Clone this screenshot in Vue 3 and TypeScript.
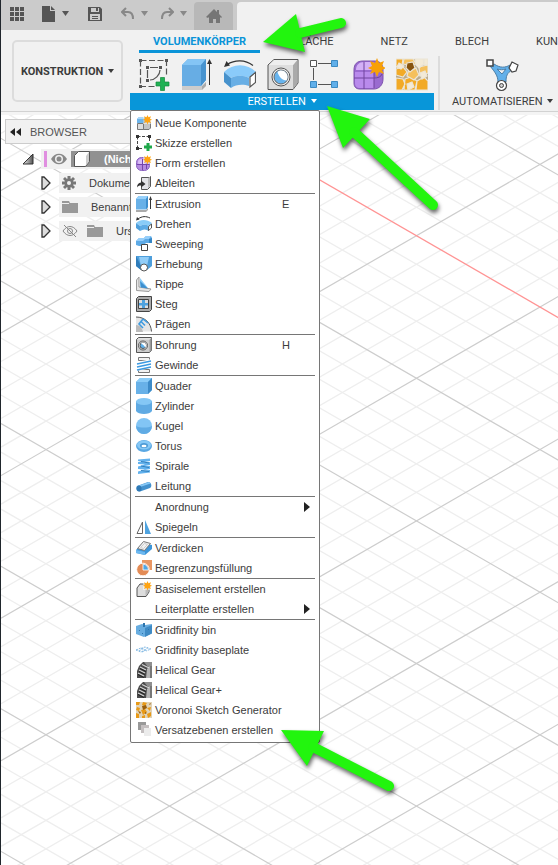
<script setup lang="ts">
interface MenuItem {
  label: string
  icon?: string
  shortcut?: string
  submenu?: boolean
}

interface GridLine {
  x1: number
  y1: number
  x2: number
  y2: number
  kind: 'minor' | 'major' | 'axis'
}

const star =
  '<path fill="#fff" d="M7 0h9v9H7z" opacity=".5"/><path fill="#ffa412" d="M11.500 0l1 2.300L15 1.300l-1 2.400 2 1-2 1 1 2.400-2.500-1-1 2.400-1-2.400-2.500 1 1-2.400-2-1 2-1-1-2.400 2.500 1z"/>'

const gear =
  '<path fill="#4c4c4c" d="M1 16V9l2-5 4-4h9v4l-4 1-1 11z"/><path fill="#8f8f8f" d="M8 0h8v4l-4 1z"/><path stroke="#d4d4d4" stroke-width="1.200" fill="none" d="M4 5l6 3M3 8l6 3M2 11l6 3M6 2.500l6 3"/><path stroke="#222" fill="none" d="M4 6.500l6 3M3 9.500l6 3M2 12.500l6 3"/><path fill="#b5b5b5" d="M11 7l3-3v12h-4z"/><path fill="#777" d="M14 4h2v12h-2z"/>'

const icons: Record<string, string> = {
  component:
    '<path fill="#6cb4ea" d="M1 4l2-2h6v6H1z"/><path fill="#3f8dc9" d="M7 4l2-2v6H7z"/><path fill="#a9d6f7" d="M1 4l2-2h6L7 4z"/><path fill="#ddd" stroke="#777" d="M1.500 8.500h6v6h-6z"/><path fill="#c4c4c4" stroke="#777" d="M7.500 8.500l1-1.500h6v6l-1.500 1.500H7.500z"/>' + star,
  sketch:
    '<path stroke="#444" stroke-dasharray="3 1.500" fill="none" d="M1.500 1.500h12v5M1.500 1.500v12h6"/><path fill="#333" d="M0 0h3v3H0zM12 0h3v3h-3zM0 12h3v3H0z"/><path fill="#1fa84a" d="M10.500 8h3v2.500H16v3h-2.500V16h-3v-2.500H8v-3h2.500z"/>',
  form:
    '<rect x=".5" y="2.500" width="13" height="13" rx="5" fill="#b58be0" stroke="#8a62bf"/><rect x="2" y="4" width="7" height="6" rx="3" fill="#d9bdf7"/><path stroke="#7545ad" fill="none" d="M6.500 4v11M1 9.500h12M10.500 8v6"/>' + star,
  derive:
    '<path fill="#e4e4e8" stroke="#555" d="M5.500 2.500h8l1-1v10l-3 3h-6V2.500z"/><path fill="#bbb" d="M12 3l2-1v9l-2 2z"/><path fill="#333" d="M5 5.500L9.500 9 5 12.500V10.500C3 10.500 2 11 1 12.500 1 9.500 2.500 7.700 5 7.500z"/>',
  extrude:
    '<path fill="#aaa" d="M0 14l10 0 2-2v2l-2 2H0z"/><path fill="#68b1e8" d="M0 3l2.500-3H12v11l-2 2.500H0z"/><path fill="#96d0fa" d="M0 3l2.500-3H12L10 3z"/><path fill="#3d8fcf" d="M10 3l2-3v11l-2 2.500z"/><path stroke="#333" fill="none" d="M14.500 2v11"/><path fill="#333" d="M13 4l1.500-4L16 4z"/>',
  revolve:
    '<path fill="#8accf8" d="M0 7c4-4 11-4 16 0l-3 3c-3-2-6-2-9 0z"/><path fill="#4d9edb" d="M0 7l4 3v5l-4-3z"/><path fill="#5eabe5" d="M4 10c3-2 6-2 9 0v5c-3-2-6-2-9 0z"/><path fill="#fff" stroke="#555" d="M12.500 10.500l3-2.500v4l-3 2.500z"/><path stroke="#333" fill="none" d="M2 3c4-3 8-3 12-1"/><path fill="#333" d="M0 4.500L1 1l2.500 2.500z"/>',
  sweep:
    '<path fill="#5daae6" d="M0 5l3-3h5l2-2h5l1 2v5h-6l-3 3H3L0 9z"/><path fill="#95cefa" d="M0 5l3-3h5l2-2h5l-2 3H9L7 5z"/><path fill="#3787c5" d="M13 3l3-1v5h-3z"/><path fill="#fff" stroke="#444" d="M5.500 8.500h6v6h-6z"/>',
  loft:
    '<path fill="#4d9edb" d="M0 0h16v10l-5 4H5l-5-4z"/><path fill="#91cdf8" d="M3 1h10l-2 9H5z"/><path fill="#2f7cba" d="M0 0l5 10v4l-5-4z"/><circle cx="8" cy="11.500" r="3.500" fill="#fff" stroke="#555"/>',
  rib:
    '<path fill="#e6e6e6" stroke="#999" d="M.5 4L3 1v10l12 2-2 2.500-12.500-1z"/><path fill="#8accf8" d="M4 2l8 10-8-1z"/><path fill="#3d8fcf" d="M4 5l8 7.500-7-1z"/>',
  web:
    '<path fill="#aaa" stroke="#444" d="M.5 2.500l2-2h13v13l-2 2H.5z"/><path fill="#ddd" stroke="#444" d="M2.500 3.500h10v9h-10z"/><path fill="#4ea2df" d="M6 4h3v3h3v2.500H9V12H6V9.500H3V7h3z"/>',
  emboss:
    '<path fill="#e6e6e6" d="M0 1c9-1 15 6 15.500 14.500H0z"/><path fill="#bbb" d="M0 9c4 0 6 3 7 7H0z"/><path fill="none" stroke="#555" d="M0 1c9 0 15 6 15.500 14.500"/><path fill="none" stroke="#3f9be0" stroke-width="1.600" d="M7 3L3 8l4 4M5 5.500l4 4M7 3l5 4"/>',
  hole:
    '<path fill="#ccc" stroke="#555" d="M.5 2.500l2-2h13v13l-2 2H.5z"/><path fill="#999" d="M13.500 2.500l2-2v13l-2 2z"/><path fill="#e2e2e2" d="M1 2.800L3 1h12l-1.500 1.800z"/><circle cx="7" cy="8.500" r="4.500" fill="#eee" stroke="#555"/><circle cx="7" cy="8.500" r="3" fill="#5fb0ea" stroke="#555"/><path fill="#fff" d="M7 5.500a3 3 0 013 3c0 1-.5 2-1 2.400C9 9 7.500 8 5 6.300 5.500 5.800 6 5.500 7 5.500z"/>',
  thread:
    '<path fill="#f2f2f2" stroke="#777" d="M2.500.5h11v3h-11zM2.500 12.500h11v3h-11z"/><path fill="#fff" d="M0 5l16-3v9L0 14z"/><path stroke="#3c9ae2" stroke-width="1.400" fill="none" d="M1 7l14-3M1 10l14-3M1 13l14-3"/>',
  box: '<path fill="#68b1e8" d="M0 4l4-4h12v12l-4 4H0z"/><path fill="#8accf8" d="M0 4l4-4h12l-4 4z"/><path fill="#3d8bc8" d="M12 4l4-4v12l-4 4z"/>',
  cylinder: '<path fill="#5faae3" d="M0 3h16v10c-2 4-14 4-16 0z"/><ellipse cx="8" cy="3.500" rx="8" ry="3.500" fill="#84c7f5"/>',
  sphere: '<circle cx="8" cy="8" r="8" fill="#82c5f5"/><path fill="#60abe4" d="M0 8c4 2 12 2 16 0a8 8 0 01-16 0z"/>',
  torus:
    '<ellipse cx="8" cy="8" rx="8" ry="6" fill="#5aa8e3"/><ellipse cx="8" cy="7" rx="7" ry="4.500" fill="#86c8f6"/><ellipse cx="8" cy="7.500" rx="4" ry="2.500" fill="#4c9ad6"/><ellipse cx="8" cy="8" rx="2.500" ry="1.300" fill="#fff"/>',
  coil:
    '<path fill="#62b2ee" d="M2 1.500l12-1v2.500l-8 1.500 8-.5v3l-8 1.500 8-.5v3l-8 1.500 8-.5v2.500L2 16v-2.500l7-2-7-.5V8.500l7-2-7-.5V4l5-1H2z"/><path stroke="#2f7fbd" fill="none" d="M5 3.500l8 1.500M5 8l8 1.500M5 12.500l8 1"/>',
  pipe:
    '<path fill="#4391cd" d="M1 8l11-4c4 0 4 5 2 6L4 13.500c-4 0-4-4-3-5.500z"/><path fill="#86c8f6" d="M3 7.500L13 4l1.500 1.500L4 9z"/><ellipse cx="3" cy="10.500" rx="2.500" ry="3" fill="#2f79b5"/>',
  mirror: '<path fill="#fff" stroke="#666" d="M6.500 3v11.500H1z"/><path fill="#4fa3e0" d="M9 1v14h6z"/>',
  thicken:
    '<path fill="#3d95d8" d="M0 10l7-7 9 2v4l-7 6-9-2z"/><path fill="#6cb8f0" d="M0 10l9 2v3l-9-2z"/><path fill="#f2f2f2" stroke="#777" d="M1.500 8.500l6-7 7 2-6 7z"/><path fill="none" stroke="#ccc" d="M4.500 7.500l4-4 3 1-4 4z"/>',
  boundary:
    '<path fill="#e99763" d="M6 0h10v10h-4L6 4z"/><circle cx="7" cy="9.500" r="6.300" fill="#e38b55" stroke="#fff" stroke-width=".8"/><path fill="#4fa6e5" stroke="#fff" stroke-width=".8" d="M7 4a6 6 0 015.500 6H7z"/>',
  base: '<path fill="#ddd" stroke="#555" d="M1 7l3-4h6l3 3v5l-3 4.500H1z"/><path fill="#bbb" d="M9.500 8L12.500 6v5l-3 4z"/>' + star,
  bin:
    '<path fill="#68ade0" d="M0 4l6-2 3 1 7-1v9l-8 4-8-3z"/><path fill="#3f8bc5" d="M9 6l7-3v8.500L9 15z"/><path fill="#2e75ad" d="M7 1h2v4H7zM3 8h1v1H3zM6 11h1v1H6zM12 7h1v1h-1z"/>',
  plate:
    '<path fill="none" stroke="#83b9e3" stroke-dasharray="2 1" d="M0 8l5-2 4 2-4 2zM5 6.500L9 5l6 2-5 2M6 10l4-2M3 9l5-3M12 5.500L9 8"/>',
  gear,
  voronoi:
    '<path fill="#e0d3b8" d="M0 0h16v16H0z"/><path fill="#e89a17" d="M0 0h4L3 3H0zM7 0l4 1-2 3-3-1zM1 5l3 1-1 3-3-1zM11 6l4-1-1 4zM5 8l4-1 2 3-4 3zM0 11l3 1v4H0zM11 12l4-2v4l-3 2zM6 14l3-1v3H6z"/><path fill="#9a5d09" d="M6 4l4-1 1 3-4 2zM2 9l3 1-1 2zM9 10l2 1-2 1zM14 1l1 1-2 1z"/>',
  planes: '<path fill="#999" d="M2 0h8v8H2z"/><path fill="#c4bfc0" d="M5 3h8v8H5z"/><path fill="#ececec" d="M8 6h7v8H8z"/>',
}

const tools: { name: string; svg: string }[] = [
  {
    name: 'Skizze erstellen',
    svg: '<path stroke="#555" stroke-width="1.200" stroke-dasharray="6 2.500" fill="none" d="M2.500 2.500h26v15M2.500 2.500v26h16"/><path fill="#555" d="M1 1h3v3H1zM27 1h3v3h-3zM1 27h3v3H1zM8 8h3v3H8zM21 8h3v3h-3zM8 21h3v3H8z"/><path fill="none" stroke="#555" stroke-width="1.200" d="M12 9.500h8M9.500 12v8M22 12c0 5-5 10-10 10"/><path fill="#20b154" stroke="#138a3c" stroke-width=".7" d="M22.500 19.500h4v4.500H31v4h-4.500v4.500h-4V28H18v-4h4.500z"/>',
  },
  {
    name: 'Extrusion',
    svg: '<path fill="#aaa" d="M1 28h20l4-4v4l-4 4H1z"/><path fill="#ccc" d="M1 28h20v4H1z"/><path fill="#67ade4" d="M1 7l6-6h18v21l-5 6H1z"/><path fill="#84c5f5" d="M1 7l6-6h18l-5 6z"/><path fill="#4793cf" d="M20 7l5-6v21l-5 6z"/><path stroke="#333" fill="none" d="M28.500 5v22"/><path fill="#333" d="M26 6l2.500-5L31 6z"/>',
  },
  {
    name: 'Drehen',
    svg: '<path fill="#8acbfa" d="M0 14c9-9 23-9 32 0l-7 6c-5-3-13-3-18 0z"/><path fill="#4792cc" d="M0 14l7 6v10l-7-6z"/><path fill="#69afe5" d="M7 20c5-3 13-3 18 0v8c-5-2-13-2-18 2z"/><path fill="#fff" stroke="#555" stroke-width="1.200" d="M26 19l5.500-4.500v10L26 29z"/><path stroke="#333" stroke-width="1.200" fill="none" d="M3 6.500c8-5 18-5 26 1"/><path fill="#333" d="M0 9l2.500-6L6 7.500z"/>',
  },
  {
    name: 'Bohrung',
    svg: '<path fill="#ddd" stroke="#555" d="M1 7l6-5.500h24V25l-5 6.500H1z"/><path fill="#aaa" d="M26 7l4.500-5v23L26 31z"/><path fill="#eee" d="M2 7l5-5h23l-4 5z"/><circle cx="14" cy="19" r="9" fill="#eee" stroke="#555"/><circle cx="14" cy="19" r="7" fill="#67b4ee" stroke="#666"/><path fill="#fff" d="M14 12.500a6.500 6.500 0 015.500 10C15 22 12 19 10.500 14c1-1 2-1.500 3.500-1.500z"/>',
  },
  {
    name: 'Muster',
    svg: '<path fill="none" stroke="#555" d="M8 5.500h14M3.500 10v12M8 26.500h14"/><path fill="#fff" stroke="#555" d="M.5 2.500h6v6h-6z"/><path fill="#60afea" stroke="#3c8ac2" d="M21.500 2.500h6v6h-6zM.5 23.500h6v6h-6zM21.500 23.500h6v6h-6z"/>',
  },
  {
    name: 'Form erstellen',
    svg: '<path fill="#9a6bd0" stroke="#7d52ad" d="M1 12C1 6 4 3 10 3h12c5 0 8 4 8 8v10c0 6-4 10-9 10H7c-4 0-6-2-6-6z"/><path fill="#b98aec" d="M2 14h19v16H7c-3 0-5-2-5-5z"/><path fill="#d3b0f6" d="M3 12c0-5 3-8 8-8h10c-2 1-2 4-2 8z"/><path stroke="#70449e" fill="none" d="M11 4v27M1 20h20c4 0 7-1 8-4M21 12v18"/><path fill="#f7a007" d="M24 0l2 5 5-2-2 5 4 2-4 2 2 4-5-2-2 5-2-5-5 2 2-4-4-2 4-2-2-5 5 2z"/>',
  },
  {
    name: 'Voronoi',
    svg: '<path fill="#b9ab8e" d="M0 1h32v31H0z"/><g stroke="#ece5d6" stroke-width="1.200"><path fill="#f2aa27" d="M0 1h7l-1 6-6 2zM0 11l7-2 4 5-4 5-7-2zM0 20l7 1 2 5-3 6H0zM9 21l6-2 6 4-2 9H8zM21 23l7-4 4 4v9H20z"/><path fill="#f5c05c" d="M8 1h9l3 5-7 1-6-1zM12 14l8-4 3 7-5 5-7-4zM23 9l9-2v8l-8 3z"/><path fill="#87530d" d="M11 5l6-1 2 6-5 4-4-4z"/><path fill="#f3ead6" d="M19 1h8l1 5-5 4-3-3zM28 1h4v6l-4 0zM11 26l5-2 2 5-6 3zM24 15l5-2 2 5-5 3zM3 5l5 3-3 3-4-2z"/></g>',
  },
]

const groups: MenuItem[][] = [
  [
    { label: 'Neue Komponente', icon: 'component' },
    { label: 'Skizze erstellen', icon: 'sketch' },
    { label: 'Form erstellen', icon: 'form' },
    { label: 'Ableiten', icon: 'derive' },
  ],
  [
    { label: 'Extrusion', icon: 'extrude', shortcut: 'E' },
    { label: 'Drehen', icon: 'revolve' },
    { label: 'Sweeping', icon: 'sweep' },
    { label: 'Erhebung', icon: 'loft' },
    { label: 'Rippe', icon: 'rib' },
    { label: 'Steg', icon: 'web' },
    { label: 'Prägen', icon: 'emboss' },
  ],
  [
    { label: 'Bohrung', icon: 'hole', shortcut: 'H' },
    { label: 'Gewinde', icon: 'thread' },
  ],
  [
    { label: 'Quader', icon: 'box' },
    { label: 'Zylinder', icon: 'cylinder' },
    { label: 'Kugel', icon: 'sphere' },
    { label: 'Torus', icon: 'torus' },
    { label: 'Spirale', icon: 'coil' },
    { label: 'Leitung', icon: 'pipe' },
  ],
  [
    { label: 'Anordnung', submenu: true },
    { label: 'Spiegeln', icon: 'mirror' },
  ],
  [
    { label: 'Verdicken', icon: 'thicken' },
    { label: 'Begrenzungsfüllung', icon: 'boundary' },
  ],
  [
    { label: 'Basiselement erstellen', icon: 'base' },
    { label: 'Leiterplatte erstellen', submenu: true },
  ],
  [
    { label: 'Gridfinity bin', icon: 'bin' },
    { label: 'Gridfinity baseplate', icon: 'plate' },
    { label: 'Helical Gear', icon: 'gear' },
    { label: 'Helical Gear+', icon: 'gear' },
    { label: 'Voronoi Sketch Generator', icon: 'voronoi' },
    { label: 'Versatzebenen erstellen', icon: 'planes' },
  ],
]

const tabs = ['VOLUMENKÖRPER', 'FLÄCHE', 'NETZ', 'BLECH', 'KUNSTSTOFF']

// Isometric ground grid: every fifth line is a major one.
function buildGrid(): GridLine[] {
  const originX = 45
  const originY = 307
  const step = 28.52
  const slope = 0.5774
  const width = 2400
  const lines: GridLine[] = []
  for (let k = -70; k <= 100; k++) {
    const c = originY + k * step
    for (const dir of [1, -1]) {
      const kind = k === -10 && dir === 1 ? 'axis' : k % 5 === 0 ? 'major' : 'minor'
      lines.push({
        x1: 0,
        y1: c - dir * slope * originX,
        x2: width,
        y2: c + dir * slope * (width - originX),
        kind,
      })
    }
  }
  const order = { minor: 0, major: 1, axis: 2 }
  return lines.sort((a, b) => order[a.kind] - order[b.kind])
}

const grid = buildGrid()
</script>

<template>
  <div class="app">
    <header class="titlebar">
      <button class="bar-btn grid-btn" aria-label="Datengruppe">
        <svg width="14" height="14" viewBox="0 0 14 14"><path fill="#555" d="M0 0h4v4H0zM5 0h4v4H5zM10 0h4v4h-4zM0 5h4v4H0zM5 5h4v4H5zM10 5h4v4h-4zM0 10h4v4H0zM5 10h4v4H5zM10 10h4v4h-4z" /></svg>
      </button>
      <button class="bar-btn" aria-label="Datei">
        <svg width="14" height="16" viewBox="0 0 14 16"><path fill="#555" d="M0 0h8v5h5v11H0zM9 0l4 4H9z" /></svg>
        <svg width="7" height="10" viewBox="0 0 7 10"><path fill="#555" d="M0 2h7L3.500 7z" /></svg>
      </button>
      <button class="bar-btn save-btn" aria-label="Speichern">
        <svg width="14" height="14" viewBox="0 0 14 14"><path fill="#555" fill-rule="evenodd" d="M0 0h12l2 2v12H0zM3 1v4h8V1zM2 7v6h10V7zM8 1h2v3H8zM4 9h6v1H4zM4 11h6v1H4z" /></svg>
      </button>
      <button class="bar-btn" aria-label="Rückgängig">
        <svg width="14" height="14" viewBox="0 0 14 14"><path fill="none" stroke="#888" stroke-width="2" d="M5 1L1 5l4 4M1 5h6c4 0 5 3 5 7" /></svg>
        <svg width="7" height="10" viewBox="0 0 7 10"><path fill="#888" d="M0 2h7L3.500 7z" /></svg>
      </button>
      <button class="bar-btn redo-btn" aria-label="Wiederholen">
        <svg width="14" height="14" viewBox="0 0 14 14"><path fill="none" stroke="#888" stroke-width="2" d="M9 1l4 4-4 4M13 5H7C3 5 2 8 2 12" /></svg>
        <svg width="7" height="10" viewBox="0 0 7 10"><path fill="#888" d="M0 2h7L3.500 7z" /></svg>
      </button>
      <button class="home" aria-label="Startseite">
        <svg width="16" height="14" viewBox="0 0 16 14"><path fill="#757575" d="M8 0l3 3V1h2v4l3 3-1 1-1-1v6h-4v-4H7v4H3V8L2 9 0 8z" /></svg>
      </button>
      <div class="doc-tab"></div>
    </header>

    <section class="ribbon">
      <button class="workspace">KONSTRUKTION <span class="caret"></span></button>
      <div class="ribbon-body">
        <nav class="tabs">
          <button v-for="(tab, i) in tabs" :key="tab" class="tab" :class="{ active: i === 0 }">{{ tab }}</button>
        </nav>
        <div class="panels">
          <div class="panel create">
            <div class="tools">
              <button v-for="tool in tools" :key="tool.name" class="tool" :aria-label="tool.name">
                <svg width="32" height="34" viewBox="0 0 32 34" v-html="tool.svg"></svg>
              </button>
            </div>
            <button class="panel-title open">ERSTELLEN <span class="caret"></span></button>
            <div class="menu" role="menu">
              <div v-for="(group, g) in groups" :key="g" class="group">
                <button v-for="item in group" :key="item.label" class="item" role="menuitem">
                  <svg class="item-icon" width="16" height="16" viewBox="0 0 16 16" v-html="item.icon ? icons[item.icon] : ''"></svg>
                  <span class="item-label">{{ item.label }}</span>
                  <span v-if="item.shortcut" class="shortcut">{{ item.shortcut }}</span>
                  <span v-if="item.submenu" class="sub"></span>
                </button>
              </div>
            </div>
          </div>
          <div class="panel automate">
            <button class="tool" aria-label="Automatisieren">
              <svg width="34" height="34" viewBox="0 0 34 34">
                <path fill="#62b0ea" stroke="#4b7da5" d="M4 8l4-2c6 4 11 4 16 1l2 5c-5 3-6 6-6 12h-8c0-6-3-10-8-16z" />
                <path fill="#f1f1f1" stroke="#4b7da5" d="M11 11c3 1 6 1 9 0l-4 5z" />
                <path fill="#fff" stroke="#444" stroke-width="1.500" d="M1 2h6v6H1z" />
                <path fill="#fff" stroke="#444" stroke-width="1.200" d="M26 4l6 3-2 6-4 1-3-4z" />
                <circle cx="15.500" cy="27.500" r="5" fill="#fff" stroke="#444" stroke-width="1.200" />
                <circle cx="15.500" cy="27.500" r="2" fill="#ccc" stroke="#444" />
              </svg>
            </button>
            <button class="panel-title">AUTOMATISIEREN <span class="caret"></span></button>
          </div>
        </div>
      </div>
    </section>

    <main class="canvas">
      <aside class="browser">
        <div class="browser-head">
          <svg width="12" height="8" viewBox="0 0 12 8"><path fill="#222" d="M5 0v8L0 4zM11 0v8L6 4z" /></svg>
          <span>BROWSER</span>
        </div>
        <div class="row root">
          <svg class="twist" width="12" height="12" viewBox="0 0 12 12">
            <defs><linearGradient id="twist"><stop offset="0" stop-color="#eee" /><stop offset="1" stop-color="#555" /></linearGradient></defs>
            <path fill="url(#twist)" stroke="#333" d="M11 1v10H1z" />
          </svg>
          <div class="cells">
            <span class="marker"></span>
            <svg width="16" height="12" viewBox="0 0 16 12"><path fill="#888" d="M0 6c4-7 12-7 16 0-4 7-12 7-16 0z" /><circle cx="8" cy="6" r="4" fill="#eee" /><circle cx="8" cy="6" r="2.500" fill="#888" /></svg>
            <span class="selected">
              <svg width="16" height="16" viewBox="0 0 16 16"><path fill="#fff" stroke="#555" d="M.5 4.500l4-4h11v10l-4 5H.5z" /><path fill="#ccc" d="M12 5l3-4v9.500L12 14z" /></svg>
              <b>(Nicht gespeichert)</b>
            </span>
          </div>
        </div>
        <div class="row child">
          <svg class="twist" width="10" height="14" viewBox="0 0 10 14"><path fill="#ddd" stroke="#333" stroke-width="1.300" d="M1 1l2 0 6 6-6 6H1z" /></svg>
          <div class="cells">
            <svg width="14" height="14" viewBox="0 0 14 14"><g fill="#777"><circle cx="7" cy="7" r="4.500" /><path d="M5.500 0h3v14h-3zM0 5.500h14v3H0z" /><path d="M1 3l2-2 10 10-2 2z" /><path d="M11 1l2 2L3 13l-2-2z" /></g><circle cx="7" cy="7" r="2" fill="#f0f0f0" /></svg>
            <span class="name">Dokumenteinstellungen</span>
          </div>
        </div>
        <div class="row child">
          <svg class="twist" width="10" height="14" viewBox="0 0 10 14"><path fill="#ddd" stroke="#333" stroke-width="1.300" d="M1 1l2 0 6 6-6 6H1z" /></svg>
          <div class="cells">
            <svg width="16" height="12" viewBox="0 0 16 12"><path fill="#999" d="M0 0h7l1 2h8v10H0z" /><path fill="#eee" d="M0 2h7v1H0z" /></svg>
            <span class="name">Benannte Ansichten</span>
          </div>
        </div>
        <div class="row child">
          <svg class="twist" width="10" height="14" viewBox="0 0 10 14"><path fill="#ddd" stroke="#333" stroke-width="1.300" d="M1 1l2 0 6 6-6 6H1z" /></svg>
          <div class="cells">
            <svg width="16" height="12" viewBox="0 0 16 12"><path fill="none" stroke="#888" d="M1 6c4-6 10-6 14 0-4 6-10 6-14 0zM2 0l12 12" /><circle cx="8" cy="6" r="2.500" fill="none" stroke="#888" /></svg>
            <svg width="16" height="12" viewBox="0 0 16 12"><path fill="#999" d="M0 0h7l1 2h8v10H0z" /><path fill="#eee" d="M0 2h7v1H0z" /></svg>
            <span class="name">Ursprung</span>
          </div>
        </div>
      </aside>
    </main>

    <svg class="ground" aria-hidden="true">
      <line v-for="(l, i) in grid" :key="i" :x1="l.x1" :y1="l.y1" :x2="l.x2" :y2="l.y2" :class="l.kind" />
    </svg>

    <svg class="arrows" aria-hidden="true">
      <g>
        <path d="M262 42l33-28 9 38z" />
        <path class="shaft" d="M299 33l41-10" />
      </g>
      <g>
        <path d="M326 106l43 13-27 29z" />
        <path class="shaft" d="M353 132l79 73" />
      </g>
      <g>
        <path d="M280 730l43 1-17 35z" />
        <path class="shaft" d="M312 747l76 39" />
      </g>
    </svg>
  </div>
</template>

<style>
body {
  background: #fff;
}
</style>

<style scoped>
.app {
  position: relative;
  display: flex;
  flex-direction: column;
  min-height: 100vh;
  overflow: hidden;
  box-sizing: border-box;
  border-left: 1px solid #20262c;
  font-family: 'Liberation Sans', Arial, sans-serif;
  font-size: 11px;
  color: #3c3c3c;
}
button {
  margin: 0;
  padding: 0;
  border: 0;
  background: none;
  color: inherit;
  font: inherit;
  white-space: nowrap;
}
svg {
  display: block;
  flex: none;
}
.titlebar {
  display: flex;
  height: 28px;
  padding-top: 2px;
  background: #cbcbcb;
  z-index: 1;
}
.bar-btn {
  display: flex;
  flex: none;
  align-items: center;
  gap: 6px;
  padding: 0 0 4px;
  margin-right: 18px;
}
.grid-btn {
  margin-left: 9px;
}
.save-btn {
  margin: 0 19px 0 1px;
}
.redo-btn {
  margin: 0 7px 0 -6px;
}
.home {
  display: flex;
  flex: none;
  align-items: center;
  justify-content: center;
  width: 39px;
  margin-right: 4px;
  border-radius: 4px 4px 0 0;
  background: #b8b8b8;
}
.doc-tab {
  flex: 1;
  border-radius: 4px 0 0;
  background: #f1f1f1;
}
.ribbon {
  position: relative;
  z-index: 2;
  display: flex;
  height: 81px;
  border-bottom: 1px solid #d2d2d2;
  background: #f1f1f1;
  font-family: Roboto, sans-serif;
  font-size: 11px;
}
.workspace {
  flex: none;
  width: 111px;
  height: 62px;
  margin: 10px 7px 0 11px;
  box-sizing: border-box;
  border: 2px solid #dcdcdc;
  border-radius: 5px;
  font-weight: 700;
}
.caret {
  display: inline-block;
  margin-left: 2px;
  border: 3px solid transparent;
  border-top: 4px solid currentColor;
  border-bottom: 0;
  vertical-align: 2px;
}
.ribbon-body {
  flex: 1;
  min-width: 0;
}
.tabs {
  display: flex;
  gap: 19px;
  height: 23px;
  padding-left: 9px;
  overflow: hidden;
}
.tab {
  flex: none;
  height: 23px;
  padding: 3px 14px 0;
  box-sizing: border-box;
  border-bottom: 3px solid transparent;
}
.active {
  border-bottom-color: #0a94d8;
  color: #0a94d8;
  font-weight: 700;
}
.panels {
  display: flex;
}
.panel {
  position: relative;
  display: flex;
  flex: none;
  flex-direction: column;
}
.create {
  width: 304px;
}
.tools {
  display: flex;
  gap: 11px;
  height: 40px;
  padding: 3px 8px 0;
  box-sizing: border-box;
}
.tool {
  flex: none;
}
.panel-title {
  height: 17px;
  padding: 0;
  line-height: 17px;
}
.open {
  background: #0896d9;
  color: #fff;
}
.automate {
  margin: 3px 0 0 4px;
  padding-left: 12px;
  border-left: 2px solid #dcdcdc;
}
.automate .tool {
  height: 37px;
  align-self: center;
}
.menu {
  position: absolute;
  top: 100%;
  left: 0;
  width: 190px;
  padding: 2px 4px 2px;
  box-sizing: border-box;
  border: 1px solid #767676;
  border-radius: 2px;
  background: #fff;
  font-family: 'Liberation Sans', Arial, sans-serif;
}
.group + .group {
  border-top: 1px solid #767676;
}
.item {
  display: flex;
  align-items: center;
  gap: 3px;
  width: 100%;
  height: 20px;
  padding: 0 5px 0 1px;
  text-align: left;
}
.item-label {
  flex: 1;
}
.shortcut {
  width: 28px;
}
.sub {
  border: 5px solid transparent;
  border-left: 6px solid #222;
  border-right: 0;
}
.canvas {
  position: relative;
  z-index: 1;
  flex: 1;
  padding: 4px;
  border-top: 3px solid #f4f4f4;
}
.browser {
  display: flex;
  flex-direction: column;
  gap: 4px;
  width: 200px;
}
.browser-head {
  display: flex;
  align-items: center;
  gap: 8px;
  height: 25px;
  padding-left: 4px;
  margin-bottom: 1px;
  box-sizing: border-box;
  border: 1px solid #ccc;
  background: #f1f1f1;
  color: #555;
}
.row {
  display: flex;
  align-items: center;
  height: 20px;
}
.root {
  padding-left: 17px;
}
.child {
  padding-left: 36px;
}
.twist {
  margin-right: 7px;
}
.child .twist {
  margin-right: 8px;
}
.cells {
  display: flex;
  flex: 1;
  align-items: center;
  height: 20px;
  padding-left: 3px;
  background: #f1f1f1;
  white-space: nowrap;
}
.root .cells {
  gap: 4px;
}
.child .cells {
  gap: 9px;
}
.name {
  padding-left: 4px;
}
.marker {
  flex: none;
  width: 3px;
  height: 16px;
  background: #e08fe0;
}
.selected {
  display: flex;
  flex: 1;
  align-items: center;
  gap: 14px;
  height: 16px;
  padding-left: 3px;
  background: #919191;
  color: #fff;
}
.ground,
.arrows {
  position: absolute;
  inset: 0;
  width: 100%;
  height: 100%;
  pointer-events: none;
}
.ground {
  z-index: 0;
}
.minor {
  stroke: #eee;
  stroke-width: 1.3;
}
.major {
  stroke: #cdcdcd;
  stroke-width: 1.2;
}
.axis {
  stroke: #ff9494;
  stroke-width: 1.3;
}
.arrows {
  z-index: 3;
}
.arrows g {
  fill: #22f50e;
  filter: drop-shadow(1px 3px 2px rgba(0, 0, 0, 0.6));
}
.shaft {
  stroke: #22f50e;
  stroke-width: 10;
  stroke-linecap: round;
}
</style>
